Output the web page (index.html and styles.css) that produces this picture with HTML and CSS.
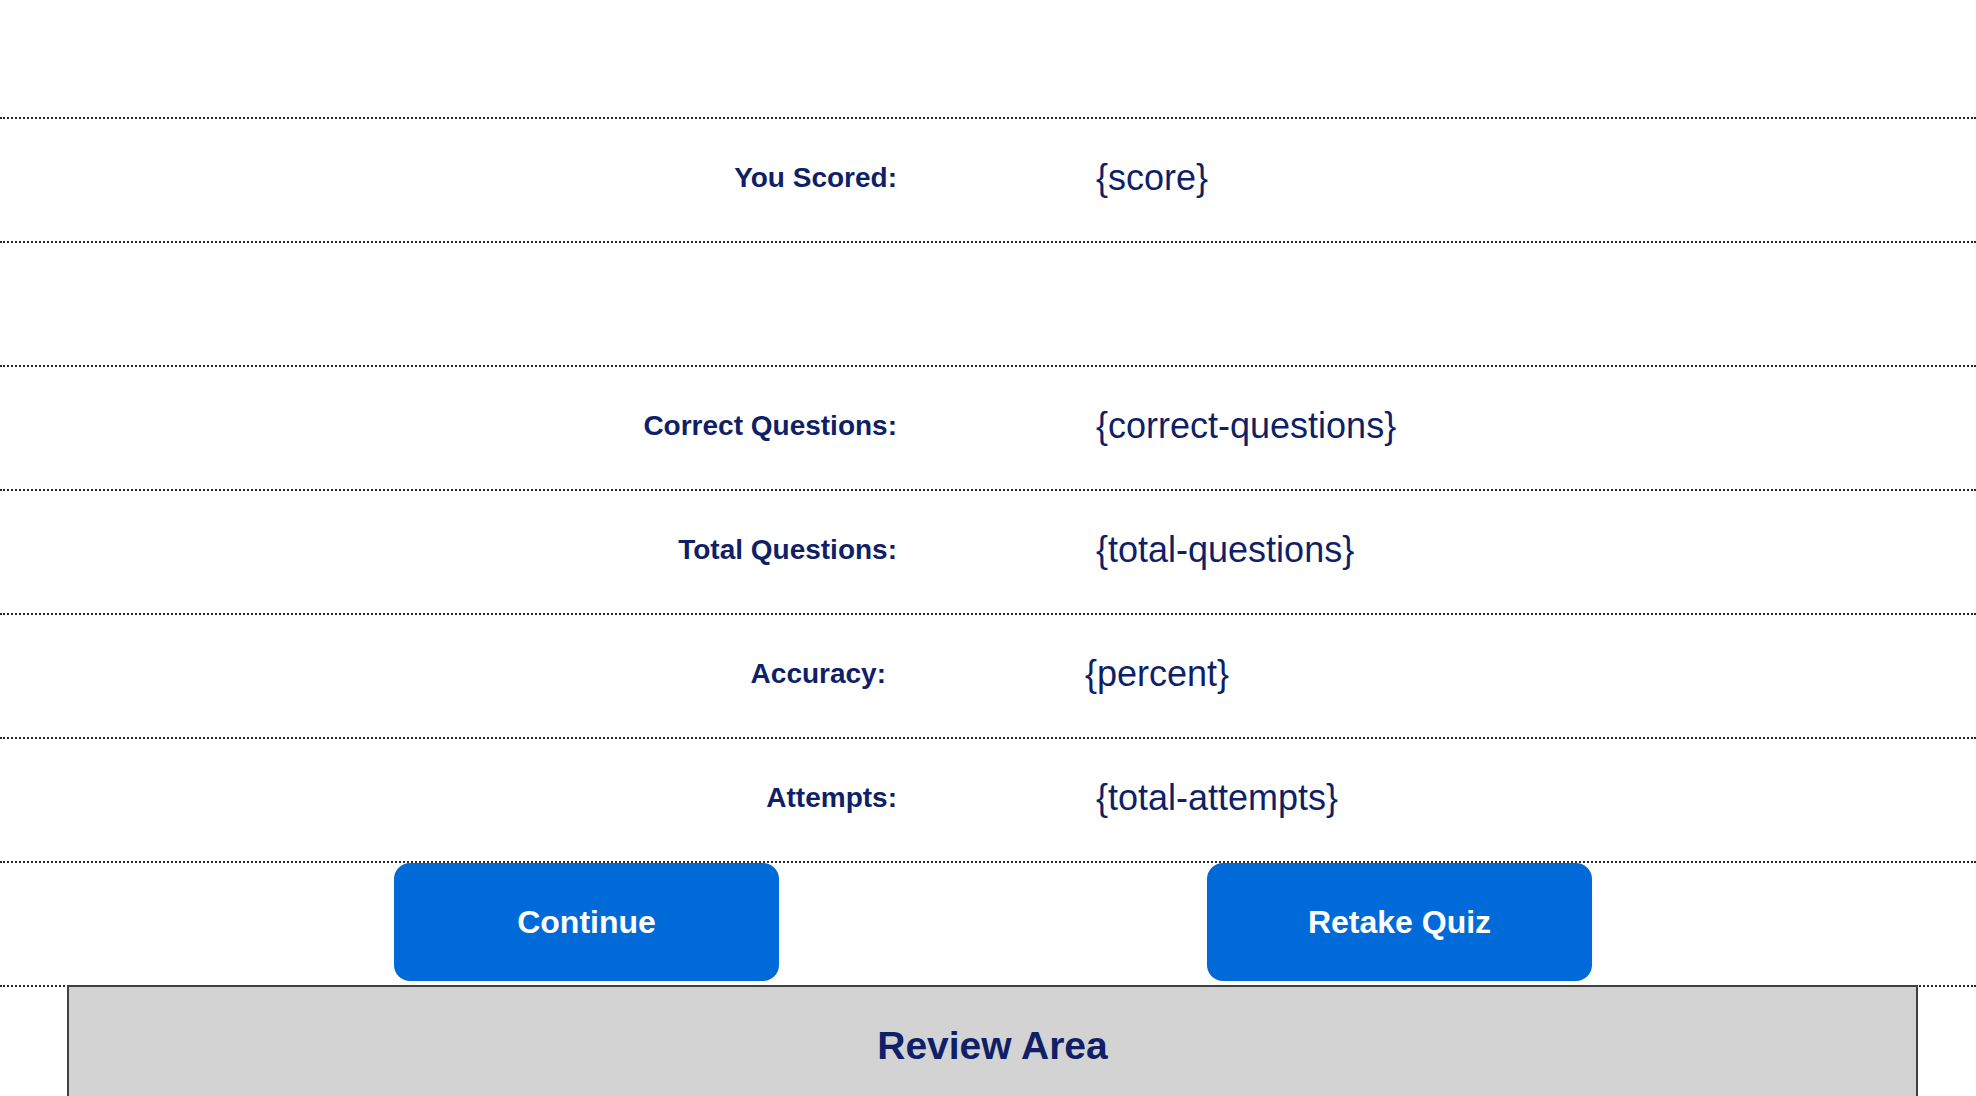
FILE: index.html
```html
<!DOCTYPE html>
<html lang="en">
<head>
    <meta charset="UTF-8">
    <meta name="viewport" content="width=device-width, initial-scale=1.0">
    <title>Quiz Results</title>
    <link rel="stylesheet" href="styles.css">
</head>
<body>
    <div class="results">
        <div class="results-head"></div>

        <div class="result-row">
            <span class="result-label">You Scored:</span>
            <span class="result-value">{score}</span>
        </div>

        <div class="result-row result-row-empty"></div>

        <div class="result-row">
            <span class="result-label">Correct Questions:</span>
            <span class="result-value">{correct-questions}</span>
        </div>

        <div class="result-row">
            <span class="result-label">Total Questions:</span>
            <span class="result-value">{total-questions}</span>
        </div>

        <div class="result-row result-row-shift">
            <span class="result-label">Accuracy:</span>
            <span class="result-value">{percent}</span>
        </div>

        <div class="result-row">
            <span class="result-label">Attempts:</span>
            <span class="result-value">{total-attempts}</span>
        </div>

        <div class="button-row">
            <button type="button" class="quiz-btn">Continue</button>
            <button type="button" class="quiz-btn">Retake Quiz</button>
        </div>
    </div>

    <div class="review-area">
        <h2>Review Area</h2>
    </div>
</body>
</html>
```

FILE: styles.css
```css
* {
    margin: 0;
    padding: 0;
    box-sizing: border-box;
}

body {
    font-family: 'Liberation Sans', Arial, sans-serif;
    background: white;
    color: #0f1f68;
}

.results-head {
    height: 119px;
    border-bottom: 2px dotted #2b2b2b;
}

.result-row {
    display: grid;
    grid-template-columns: 1fr 1fr;
    align-items: center;
    height: 124px;
    padding-bottom: 4px;
    border-bottom: 2px dotted #2b2b2b;
}

.result-label {
    text-align: right;
    padding-right: 91px;
    font-size: 28px;
    font-weight: 700;
}

.result-value {
    padding-left: 108px;
    font-size: 36px;
}

.result-row-shift .result-label {
    padding-right: 102px;
}

.result-row-shift .result-value {
    padding-left: 97px;
}

.button-row {
    display: flex;
    gap: 428px;
    height: 124px;
    padding-left: 394px;
    border-bottom: 2px dotted #2b2b2b;
}

.quiz-btn {
    width: 385px;
    height: 118px;
    background: #006ad9;
    color: white;
    border: none;
    border-radius: 16px;
    font-family: inherit;
    font-size: 32px;
    font-weight: 700;
    cursor: pointer;
}

.review-area {
    margin: -2px 58px 0 67px;
    height: 300px;
    background: #d3d3d3;
    border: 2px solid #404040;
    padding-top: 37px;
    text-align: center;
}

.review-area h2 {
    font-size: 39px;
    font-weight: 700;
}
```
